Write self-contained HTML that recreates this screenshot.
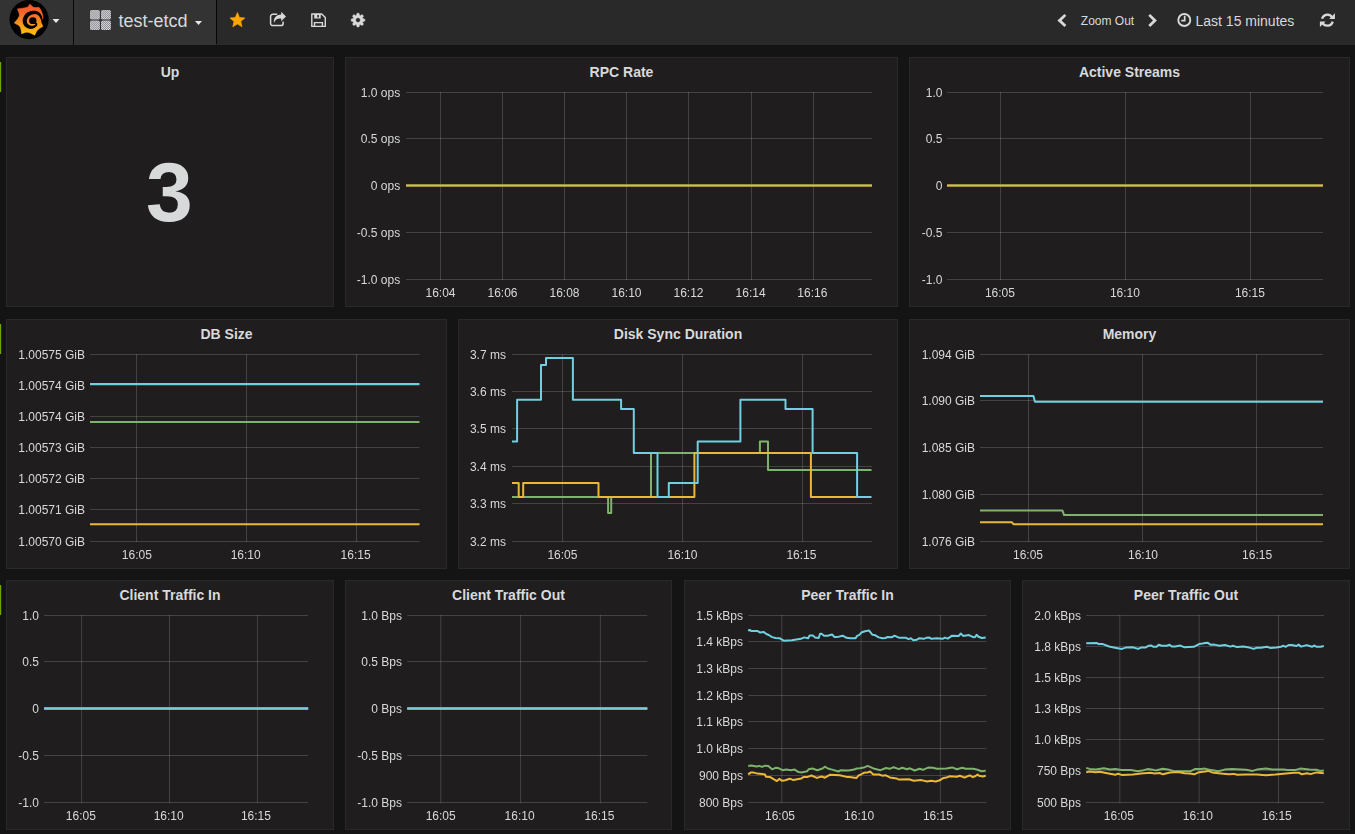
<!DOCTYPE html>
<html lang="en"><head><meta charset="utf-8"><title>Grafana - test-etcd</title>
<style>
html,body{margin:0;padding:0}
body{width:1355px;height:834px;overflow:hidden;background:#141414;color:#d8d9da;font-family:"Liberation Sans",Arial,sans-serif;font-size:14px;position:relative}
.navbar{position:absolute;left:0;top:0;width:1355px;height:45px;background:#292929}
.navbar .logo{position:absolute;left:0;top:0;width:73px;height:45px;background:#333;border-right:1px solid #080808}
.navbar .dash{position:absolute;left:74px;top:0;width:142px;height:45px;background:#333}
.navbar .dash:after{content:'';position:absolute;left:142px;top:0;width:1px;height:44px;background:#060606}
.navbar .dash .name{position:absolute;left:44.5px;top:10px;font-size:18px;line-height:22px;color:#d8d9da;white-space:nowrap}
.navbar svg{position:absolute;left:0;top:0}
.navbar .t{position:absolute;white-space:nowrap;color:#d8d9da}
.grip{position:absolute;left:0;width:2px;height:30px;background:linear-gradient(90deg,#6fa700 0,#6fa700 50%,#232b12 50%,#232b12 100%)}
.panel{position:absolute;background:#1f1d1d;border:1px solid #292929;overflow:hidden}
.ptitle{position:absolute;left:0;right:0;top:6px;text-align:center;font-weight:bold;font-size:14px;line-height:16px;color:#d8d9da}
.chart{position:absolute;left:-1px;top:-1px;will-change:transform}
.chart .ax text, .chart text{font-family:"Liberation Sans",Arial,sans-serif;font-size:12px;fill:#d8d9da}
.big{position:absolute;left:-0.6px;right:0.6px;top:86px;text-align:center;font-size:84px;font-weight:bold;line-height:96px;color:#d8d9da}

</style></head>
<body>
<div class="navbar">
<div class="logo"></div>
<div class="dash"><span class="name">test-etcd</span></div>
<span class="t" style="left:1080.8px;top:14px;font-size:12px;line-height:14px">Zoom Out</span>
<span class="t" style="left:1195.5px;top:13px;font-size:14px;line-height:16px">Last 15 minutes</span>
<svg width="1355" height="45" viewBox="0 0 1355 45">
<defs><linearGradient id="lg" x1="0" y1="4" x2="0" y2="35" gradientUnits="userSpaceOnUse"><stop offset="0" stop-color="#f15b2a"/><stop offset="0.25" stop-color="#f2622a"/><stop offset="1" stop-color="#fcc50c"/></linearGradient>
<pattern id="hatch" width="1.4" height="1.4" patternUnits="userSpaceOnUse" patternTransform="rotate(-45)"><rect width="1.4" height="1.4" fill="#e6e6ea"/><rect width="1.4" height="0.7" fill="#7c7c82"/></pattern></defs>
<circle cx="29.1" cy="19.6" r="19.6" fill="#000"/>
<path d="M29.8 3.9 L32.26 6.27 Q33.77 7.72 35.76 7.56 L39 7.3  C41.6 10.4 43.1 14.6 43.0 18.9 L40.9 21.5 L42.9 26.4 L39.43 28.59 Q37.3 29.93 36.31 31.93 L34.7 35.2 L30.29 32.98 Q27.59 31.63 25.31 32.45 L21.6 33.8 L20.93 29.13 Q20.51 26.27 18.15 25.03 L14.3 23 L17.93 18.51 Q20.16 15.76 19.11 13.15 L17.4 8.9 L23.96 7.97 Q27.98 7.4 28.67 6.07 L29.8 3.9 Z" fill="url(#lg)" stroke="url(#lg)" stroke-width="0.5" stroke-linejoin="round"/>
<path d="M43.35 21.77 L43.29 21.56 L43.21 21.27 L43.11 20.93 L42.99 20.56 L42.88 20.16 L42.76 19.75 L42.65 19.35 L42.54 18.98 L42.45 18.63 L42.37 18.26 L42.29 17.87 L42.2 17.46 L42.1 17.03 L41.98 16.6 L41.83 16.16 L41.66 15.73 L41.47 15.33 L41.27 14.95 L41.06 14.57 L40.82 14.19 L40.56 13.82 L40.27 13.45 L39.95 13.1 L39.61 12.77 L39.26 12.47 L38.89 12.18 L38.49 11.91 L38.07 11.65 L37.62 11.41 L37.14 11.2 L36.63 11.02 L36.1 10.88 L35.58 10.78 L35.04 10.71 L34.49 10.67 L33.92 10.66 L33.34 10.68 L32.74 10.74 L32.13 10.83 L31.54 10.96 L30.95 11.1 L30.34 11.26 L29.68 11.46 L28.99 11.7 L28.29 12 L27.57 12.36 L26.87 12.82 L26.21 13.36 L25.62 13.96 L25.07 14.62 L24.54 15.33 L24.06 16.08 L23.61 16.88 L23.23 17.71 L22.93 18.57 L22.73 19.46 L22.64 20.36 L22.67 21.24 L22.78 22.11 L22.97 22.95 L23.23 23.77 L23.56 24.55 L23.96 25.28 L24.45 25.98 L25.05 26.62 L25.73 27.15 L26.44 27.59 L27.16 27.96 L27.89 28.25 L28.6 28.49 L29.28 28.67 L29.94 28.81 L30.61 28.89 L31.28 28.88 L31.92 28.81 L32.52 28.69 L33.08 28.52 L33.6 28.33 L34.07 28.12 L34.53 27.89 L34.99 27.61 L35.43 27.29 L35.85 26.94 L36.23 26.57 L36.57 26.18 L36.87 25.78 L37.11 25.37 L37.31 24.88 L37.35 24.29 L37.2 23.77 L36.98 23.37 L36.73 23.05 L36.48 22.78 L36.27 22.57 L36.13 22.42 L36.04 22.33 L34.76 23.27 L34.87 23.45 L35.05 23.66 L35.22 23.88 L35.37 24.09 L35.48 24.28 L35.53 24.41 L35.51 24.41 L35.49 24.32 L35.43 24.35 L35.27 24.5 L35.04 24.69 L34.76 24.9 L34.44 25.09 L34.11 25.27 L33.79 25.41 L33.47 25.51 L33.13 25.6 L32.76 25.68 L32.39 25.74 L32.02 25.77 L31.66 25.78 L31.31 25.75 L30.99 25.69 L30.66 25.59 L30.26 25.44 L29.79 25.24 L29.3 25 L28.82 24.73 L28.38 24.44 L28.01 24.15 L27.73 23.87 L27.55 23.62 L27.39 23.32 L27.22 22.92 L27.07 22.46 L26.95 21.97 L26.86 21.47 L26.83 20.98 L26.83 20.53 L26.87 20.14 L26.97 19.74 L27.13 19.26 L27.36 18.72 L27.64 18.15 L27.97 17.6 L28.32 17.07 L28.67 16.61 L28.99 16.24 L29.29 15.95 L29.63 15.69 L30.03 15.44 L30.48 15.2 L30.97 14.98 L31.47 14.78 L31.98 14.6 L32.46 14.44 L32.89 14.31 L33.29 14.22 L33.68 14.15 L34.07 14.1 L34.45 14.08 L34.81 14.08 L35.17 14.09 L35.5 14.12 L35.8 14.17 L36.09 14.23 L36.38 14.32 L36.67 14.43 L36.96 14.56 L37.24 14.7 L37.53 14.86 L37.79 15.03 L38.03 15.2 L38.26 15.38 L38.48 15.58 L38.71 15.81 L38.92 16.06 L39.14 16.32 L39.35 16.59 L39.54 16.87 L39.72 17.14 L39.88 17.43 L40.04 17.76 L40.2 18.11 L40.35 18.47 L40.51 18.86 L40.68 19.24 L40.86 19.62 L41.05 19.99 L41.24 20.37 L41.44 20.75 L41.64 21.12 L41.83 21.46 L42 21.77 L42.14 22.03 L42.25 22.23Z" fill="#000"/>
<ellipse cx="32.8" cy="20.7" rx="3.7" ry="3.4" fill="#000"/>
<path d="M52.5 19 h7 l-3.5 3.9z M195 21 h7 l-3.5 3.9z" fill="#e8e8e8"/>
<rect x="90" y="10" width="9.9" height="9.5" rx="1.6" fill="url(#hatch)"/>
<rect x="101" y="10" width="9.9" height="9.5" rx="1.6" fill="url(#hatch)"/>
<rect x="90" y="20.6" width="9.9" height="9.5" rx="1.6" fill="url(#hatch)"/>
<rect x="101" y="20.6" width="9.9" height="9.5" rx="1.6" fill="url(#hatch)"/>
<polygon points="237.4,12.6 239.46,17.57 244.82,17.99 240.73,21.48 241.98,26.71 237.4,23.9 232.82,26.71 234.07,21.48 229.98,17.99 235.34,17.57" fill="#ffa500" stroke="#ffa500" stroke-width="0.7" stroke-linejoin="round"/>
<path d="M277.2 14.3 H272.7 a2.1 2.1 0 0 0 -2.1 2.1 V23.5 a2.1 2.1 0 0 0 2.1 2.1 H281 a2.1 2.1 0 0 0 2.1 -2.1 V21.6" fill="none" stroke="#d8d9da" stroke-width="1.5"/>
<path d="M281.2 11.7 L286 16.5 L281.2 21.3 V18.5 C277.2 18.4 275 19.6 274 23.3 C273.2 18 276 14.7 281.2 14.6 Z" fill="#d8d9da"/>
<path d="M311.8 14 H321.7 L325.3 17.6 V26.4 H311.8 Z" fill="none" stroke="#d8d9da" stroke-width="1.4" stroke-linejoin="round"/>
<path d="M314.2 14 H320.7 V18.5 H314.2 Z M317.3 15.1 H318.9 V17.5 H317.3 Z" fill="#d8d9da" fill-rule="evenodd"/>
<path d="M314.5 26.4 V22.6 H322.4 V26.4" fill="none" stroke="#d8d9da" stroke-width="1.4"/>
<path d="M362.75 18.54 L364.83 19.13 L364.83 21.07 L362.75 21.66 L362.46 22.36 L363.52 24.24 L362.14 25.62 L360.26 24.56 L359.56 24.85 L358.97 26.93 L357.03 26.93 L356.44 24.85 L355.74 24.56 L353.86 25.62 L352.48 24.24 L353.54 22.36 L353.25 21.66 L351.17 21.07 L351.17 19.13 L353.25 18.54 L353.54 17.84 L352.48 15.96 L353.86 14.58 L355.74 15.64 L356.44 15.35 L357.03 13.27 L358.97 13.27 L359.56 15.35 L360.26 15.64 L362.14 14.58 L363.52 15.96 L362.46 17.84Z M355.6 20.1 a2.4 2.4 0 1 0 4.8 0 a2.4 2.4 0 1 0 -4.8 0Z" fill="#d8d9da" fill-rule="evenodd" stroke="#d8d9da" stroke-width="0.5" stroke-linejoin="round"/>
<polygon points="1064.4,13.9 1066.3,15.8 1061.6,20.4 1066.3,25 1064.4,26.9 1057.4,20.4" fill="#d8d9da"/>
<polygon points="1150.2,13.9 1148.3,15.8 1153,20.4 1148.3,25 1150.2,26.9 1156.9,20.4" fill="#d8d9da"/>
<circle cx="1184.3" cy="20" r="6" fill="none" stroke="#d8d9da" stroke-width="1.9"/>
<path d="M1184.7 15.8 V20.7 H1181.3" fill="none" stroke="#d8d9da" stroke-width="1.7"/>
<path d="M1322.09 18.78 A5.5 5.5 0 0 1 1332.38 17.88" fill="none" stroke="#d8d9da" stroke-width="2.3"/>
<path d="M1332.71 21.62 A5.5 5.5 0 0 1 1322.42 22.52" fill="none" stroke="#d8d9da" stroke-width="2.3"/>
<path d="M1334.9 13.3 V19 H1329.2 Z M1319.9 27.1 V21.4 H1325.6 Z" fill="#d8d9da"/>
</svg>
</div>
<div class="grip" style="top:62px"></div>
<div class="grip" style="top:324px"></div>
<div class="grip" style="top:585px"></div>
<div class="panel" style="left:6px;top:57px;width:326px;height:248px">
<div class="ptitle">Up</div>
<div class="big">3</div>
</div>
<div class="panel" style="left:345px;top:57px;width:551px;height:248px">
<div class="ptitle">RPC Rate</div>
<svg class="chart" width="553" height="250" viewBox="345 57 553 250">
<g stroke="rgba(200,200,200,0.22)" stroke-width="1">
<line x1="406" x2="872" y1="92.5" y2="92.5"/>
<line x1="406" x2="872" y1="138.5" y2="138.5"/>
<line x1="406" x2="872" y1="185.5" y2="185.5"/>
<line x1="406" x2="872" y1="232.5" y2="232.5"/>
<line x1="406" x2="872" y1="279.5" y2="279.5"/>
<line x1="440.5" x2="440.5" y1="92" y2="280"/>
<line x1="502.5" x2="502.5" y1="92" y2="280"/>
<line x1="564.5" x2="564.5" y1="92" y2="280"/>
<line x1="626.5" x2="626.5" y1="92" y2="280"/>
<line x1="688.5" x2="688.5" y1="92" y2="280"/>
<line x1="751.5" x2="751.5" y1="92" y2="280"/>
<line x1="813.5" x2="813.5" y1="92" y2="280"/>
</g>
<g class="ax" text-anchor="end">
<text x="400.2" y="96.8">1.0 ops</text>
<text x="400.2" y="142.8">0.5 ops</text>
<text x="400.2" y="189.8">0 ops</text>
<text x="400.2" y="236.8">-0.5 ops</text>
<text x="400.2" y="283.8">-1.0 ops</text>
</g>
<g class="ax" text-anchor="middle">
<text x="440.5" y="296.5">16:04</text>
<text x="502.5" y="296.5">16:06</text>
<text x="564.5" y="296.5">16:08</text>
<text x="626.5" y="296.5">16:10</text>
<text x="688.5" y="296.5">16:12</text>
<text x="750.6" y="296.5">16:14</text>
<text x="812.3" y="296.5">16:16</text>
</g>
<g fill="none" stroke-width="2" stroke-linejoin="round">
<path stroke="#7EB26D" d="M406 185.5 L872 185.5"/>
<path stroke="#EAB839" d="M406 185.5 L872 185.5"/>
</g>
</svg>

</div>
<div class="panel" style="left:909px;top:57px;width:439px;height:248px">
<div class="ptitle">Active Streams</div>
<svg class="chart" width="441" height="250" viewBox="909 57 441 250">
<g stroke="rgba(200,200,200,0.22)" stroke-width="1">
<line x1="947" x2="1323" y1="92.5" y2="92.5"/>
<line x1="947" x2="1323" y1="138.5" y2="138.5"/>
<line x1="947" x2="1323" y1="185.5" y2="185.5"/>
<line x1="947" x2="1323" y1="232.5" y2="232.5"/>
<line x1="947" x2="1323" y1="279.5" y2="279.5"/>
<line x1="1000.5" x2="1000.5" y1="92" y2="280"/>
<line x1="1125.5" x2="1125.5" y1="92" y2="280"/>
<line x1="1250.5" x2="1250.5" y1="92" y2="280"/>
</g>
<g class="ax" text-anchor="end">
<text x="942.5" y="96.8">1.0</text>
<text x="942.5" y="142.8">0.5</text>
<text x="942.5" y="189.8">0</text>
<text x="942.5" y="236.8">-0.5</text>
<text x="942.5" y="283.8">-1.0</text>
</g>
<g class="ax" text-anchor="middle">
<text x="999.95" y="296.5">16:05</text>
<text x="1124.9" y="296.5">16:10</text>
<text x="1249.9" y="296.5">16:15</text>
</g>
<g fill="none" stroke-width="2" stroke-linejoin="round">
<path stroke="#7EB26D" d="M947 185.5 L1323 185.5"/>
<path stroke="#EAB839" d="M947 185.5 L1323 185.5"/>
</g>
</svg>

</div>
<div class="panel" style="left:6px;top:319px;width:439px;height:248px">
<div class="ptitle">DB Size</div>
<svg class="chart" width="441" height="250" viewBox="6 319 441 250">
<g stroke="rgba(200,200,200,0.22)" stroke-width="1">
<line x1="90" x2="419.5" y1="354.5" y2="354.5"/>
<line x1="90" x2="419.5" y1="385.5" y2="385.5"/>
<line x1="90" x2="419.5" y1="416.5" y2="416.5"/>
<line x1="90" x2="419.5" y1="447.5" y2="447.5"/>
<line x1="90" x2="419.5" y1="478.5" y2="478.5"/>
<line x1="90" x2="419.5" y1="509.5" y2="509.5"/>
<line x1="90" x2="419.5" y1="541.5" y2="541.5"/>
<line x1="136.5" x2="136.5" y1="354" y2="542"/>
<line x1="246.5" x2="246.5" y1="354" y2="542"/>
<line x1="356.5" x2="356.5" y1="354" y2="542"/>
</g>
<g class="ax" text-anchor="end">
<text x="85" y="358.8">1.00575 GiB</text>
<text x="85" y="389.8">1.00574 GiB</text>
<text x="85" y="420.8">1.00574 GiB</text>
<text x="85" y="451.8">1.00573 GiB</text>
<text x="85" y="482.8">1.00572 GiB</text>
<text x="85" y="513.8">1.00571 GiB</text>
<text x="85" y="545.8">1.00570 GiB</text>
</g>
<g class="ax" text-anchor="middle">
<text x="136.8" y="558.5">16:05</text>
<text x="245.7" y="558.5">16:10</text>
<text x="355.6" y="558.5">16:15</text>
</g>
<g fill="none" stroke-width="2" stroke-linejoin="round">
<path stroke="#7EB26D" d="M90 422.1 L419.5 422.1"/>
<path stroke="#EAB839" d="M90 524.15 L419.5 524.15"/>
<path stroke="#6ED0E0" d="M90 384.0 L419.5 384.0"/>
</g>
</svg>

</div>
<div class="panel" style="left:458px;top:319px;width:438px;height:248px">
<div class="ptitle">Disk Sync Duration</div>
<svg class="chart" width="440" height="250" viewBox="458 319 440 250">
<g stroke="rgba(200,200,200,0.22)" stroke-width="1">
<line x1="512" x2="872" y1="354.5" y2="354.5"/>
<line x1="512" x2="872" y1="391.5" y2="391.5"/>
<line x1="512" x2="872" y1="428.5" y2="428.5"/>
<line x1="512" x2="872" y1="466.5" y2="466.5"/>
<line x1="512" x2="872" y1="503.5" y2="503.5"/>
<line x1="512" x2="872" y1="541.5" y2="541.5"/>
<line x1="562.5" x2="562.5" y1="354" y2="542"/>
<line x1="682.5" x2="682.5" y1="354" y2="542"/>
<line x1="802.5" x2="802.5" y1="354" y2="542"/>
</g>
<g class="ax" text-anchor="end">
<text x="505.9" y="358.8">3.7 ms</text>
<text x="505.9" y="395.8">3.6 ms</text>
<text x="505.9" y="432.8">3.5 ms</text>
<text x="505.9" y="470.8">3.4 ms</text>
<text x="505.9" y="507.8">3.3 ms</text>
<text x="505.9" y="545.8">3.2 ms</text>
</g>
<g class="ax" text-anchor="middle">
<text x="562.4" y="558.5">16:05</text>
<text x="682.4" y="558.5">16:10</text>
<text x="801.45" y="558.5">16:15</text>
</g>
<g fill="none" stroke-width="2" stroke-linejoin="round">
<path stroke="#7EB26D" d="M512 496.9 L608.1 496.9 L608.1 512.9 L611.2 512.9 L611.2 496.9 L651 496.9 L651 452.9 L759.9 452.9 L759.9 441.4 L768 441.4 L768 470.1 L871.5 470.1"/>
<path stroke="#EAB839" d="M512 482.9 L518.7 482.9 L518.7 496.9 L523.2 496.9 L523.2 482.9 L598.5 482.9 L598.5 496.9 L694.4 496.9 L694.4 452.9 L810.9 452.9 L810.9 496.9 L857.1 496.9"/>
<path stroke="#6ED0E0" d="M512 441.4 L517.1 441.4 L517.1 399.8 L541 399.8 L541 364.9 L546 364.9 L546 358.1 L572.9 358.1 L572.9 399.8 L621.1 399.7 L621.1 409.1 L633.8 409.1 L633.8 452.9 L657.5 452.9 L657.5 496.9 L668.8 496.9 L668.8 482.9 L697.7 482.9 L697.7 441.4 L740.4 441.4 L740.4 399.7 L785.5 399.7 L785.5 409.1 L812.6 409.1 L812.6 452.9 L857.1 452.9 L857.1 496.9 L871.5 496.9"/>
</g>
</svg>

</div>
<div class="panel" style="left:909px;top:319px;width:439px;height:248px">
<div class="ptitle">Memory</div>
<svg class="chart" width="441" height="250" viewBox="909 319 441 250">
<g stroke="rgba(200,200,200,0.22)" stroke-width="1">
<line x1="980" x2="1323" y1="354.5" y2="354.5"/>
<line x1="980" x2="1323" y1="400.5" y2="400.5"/>
<line x1="980" x2="1323" y1="447.5" y2="447.5"/>
<line x1="980" x2="1323" y1="494.5" y2="494.5"/>
<line x1="980" x2="1323" y1="541.5" y2="541.5"/>
<line x1="1028.5" x2="1028.5" y1="354" y2="542"/>
<line x1="1142.5" x2="1142.5" y1="354" y2="542"/>
<line x1="1256.5" x2="1256.5" y1="354" y2="542"/>
</g>
<g class="ax" text-anchor="end">
<text x="975" y="358.8">1.094 GiB</text>
<text x="975" y="404.8">1.090 GiB</text>
<text x="975" y="451.8">1.085 GiB</text>
<text x="975" y="498.8">1.080 GiB</text>
<text x="975" y="545.8">1.076 GiB</text>
</g>
<g class="ax" text-anchor="middle">
<text x="1028" y="558.5">16:05</text>
<text x="1143" y="558.5">16:10</text>
<text x="1257.1" y="558.5">16:15</text>
</g>
<g fill="none" stroke-width="2" stroke-linejoin="round">
<path stroke="#7EB26D" d="M980 510.4 L1062.4 510.4 L1064.1 515.1 L1323 515.1"/>
<path stroke="#EAB839" d="M980 522.3 L1012 522.3 L1013.5 524.2 L1323 524.2"/>
<path stroke="#6ED0E0" d="M980 396.1 L1033.4 396.1 L1035 401.8 L1323 401.8"/>
</g>
</svg>

</div>
<div class="panel" style="left:6px;top:580px;width:326px;height:248px">
<div class="ptitle">Client Traffic In</div>
<svg class="chart" width="328" height="250" viewBox="6 580 328 250">
<g stroke="rgba(200,200,200,0.22)" stroke-width="1">
<line x1="44.15" x2="308.15" y1="615.5" y2="615.5"/>
<line x1="44.15" x2="308.15" y1="661.5" y2="661.5"/>
<line x1="44.15" x2="308.15" y1="708.5" y2="708.5"/>
<line x1="44.15" x2="308.15" y1="755.5" y2="755.5"/>
<line x1="44.15" x2="308.15" y1="802.5" y2="802.5"/>
<line x1="81.6" x2="81.6" y1="615" y2="803"/>
<line x1="169.5" x2="169.5" y1="615" y2="803"/>
<line x1="257.4" x2="257.4" y1="615" y2="803"/>
</g>
<g class="ax" text-anchor="end">
<text x="39" y="619.8">1.0</text>
<text x="39" y="665.8">0.5</text>
<text x="39" y="712.8">0</text>
<text x="39" y="759.8">-0.5</text>
<text x="39" y="806.8">-1.0</text>
</g>
<g class="ax" text-anchor="middle">
<text x="80.8" y="819.5">16:05</text>
<text x="168.7" y="819.5">16:10</text>
<text x="255.9" y="819.5">16:15</text>
</g>
<g fill="none" stroke-width="2" stroke-linejoin="round">
<path stroke="#7EB26D" d="M44.15 708.5 L308.15 708.5"/>
<path stroke="#EAB839" d="M44.15 708.5 L308.15 708.5"/>
<path stroke="#6ED0E0" d="M44.15 708.5 L308.15 708.5"/>
</g>
</svg>

</div>
<div class="panel" style="left:345px;top:580px;width:325px;height:248px">
<div class="ptitle">Client Traffic Out</div>
<svg class="chart" width="327" height="250" viewBox="345 580 327 250">
<g stroke="rgba(200,200,200,0.22)" stroke-width="1">
<line x1="407.28" x2="647.28" y1="615.5" y2="615.5"/>
<line x1="407.28" x2="647.28" y1="661.5" y2="661.5"/>
<line x1="407.28" x2="647.28" y1="708.5" y2="708.5"/>
<line x1="407.28" x2="647.28" y1="755.5" y2="755.5"/>
<line x1="407.28" x2="647.28" y1="802.5" y2="802.5"/>
<line x1="440.78" x2="440.78" y1="615" y2="803"/>
<line x1="520.6" x2="520.6" y1="615" y2="803"/>
<line x1="600.4" x2="600.4" y1="615" y2="803"/>
</g>
<g class="ax" text-anchor="end">
<text x="402" y="619.8">1.0 Bps</text>
<text x="402" y="665.8">0.5 Bps</text>
<text x="402" y="712.8">0 Bps</text>
<text x="402" y="759.8">-0.5 Bps</text>
<text x="402" y="806.8">-1.0 Bps</text>
</g>
<g class="ax" text-anchor="middle">
<text x="440.65" y="819.5">16:05</text>
<text x="519.6" y="819.5">16:10</text>
<text x="599.4" y="819.5">16:15</text>
</g>
<g fill="none" stroke-width="2" stroke-linejoin="round">
<path stroke="#7EB26D" d="M407.28 708.5 L647.28 708.5"/>
<path stroke="#EAB839" d="M407.28 708.5 L647.28 708.5"/>
<path stroke="#6ED0E0" d="M407.28 708.5 L647.28 708.5"/>
</g>
</svg>

</div>
<div class="panel" style="left:684px;top:580px;width:325px;height:248px">
<div class="ptitle">Peer Traffic In</div>
<svg class="chart" width="327" height="250" viewBox="684 580 327 250">
<g stroke="rgba(200,200,200,0.22)" stroke-width="1">
<line x1="748.33" x2="986.33" y1="615.5" y2="615.5"/>
<line x1="748.33" x2="986.33" y1="641.5" y2="641.5"/>
<line x1="748.33" x2="986.33" y1="668.5" y2="668.5"/>
<line x1="748.33" x2="986.33" y1="695.5" y2="695.5"/>
<line x1="748.33" x2="986.33" y1="721.5" y2="721.5"/>
<line x1="748.33" x2="986.33" y1="748.5" y2="748.5"/>
<line x1="748.33" x2="986.33" y1="775.5" y2="775.5"/>
<line x1="748.33" x2="986.33" y1="802.5" y2="802.5"/>
<line x1="781.8" x2="781.8" y1="615" y2="803"/>
<line x1="861.05" x2="861.05" y1="615" y2="803"/>
<line x1="940.4" x2="940.4" y1="615" y2="803"/>
</g>
<g class="ax" text-anchor="end">
<text x="743" y="619.8">1.5 kBps</text>
<text x="743" y="645.8">1.4 kBps</text>
<text x="743" y="672.8">1.3 kBps</text>
<text x="743" y="699.8">1.2 kBps</text>
<text x="743" y="725.8">1.1 kBps</text>
<text x="743" y="752.8">1.0 kBps</text>
<text x="743" y="779.8">900 Bps</text>
<text x="743" y="806.8">800 Bps</text>
</g>
<g class="ax" text-anchor="middle">
<text x="780" y="819.5">16:05</text>
<text x="859.1" y="819.5">16:10</text>
<text x="937.9" y="819.5">16:15</text>
</g>
<g fill="none" stroke-width="2" stroke-linejoin="round">
<path stroke="#7EB26D" d="M748.2 765.9 L751.5 765.4 L756.3 766.4 L759.2 765.9 L762.1 766.9 L765 765.7 L768.3 766.1 L772.1 769.3 L775.5 767.8 L778.4 768.1 L782.7 770.2 L786.1 769.6 L790.9 770.2 L794.7 769.6 L798.5 772.1 L801.4 772.4 L807.2 771.2 L808.6 769.3 L812.5 768.5 L817.3 770.2 L822.5 768.5 L825.2 766.7 L827.8 768.5 L832.1 769.6 L838.4 771.5 L840.8 770.2 L848.4 770.5 L854.2 769.6 L856.6 768.5 L860 768.3 L863.8 767.6 L867.7 765.9 L874.4 768.8 L880.6 770.2 L885.9 768 L889.8 768.8 L893.6 767.2 L898.9 769.1 L902.2 767.8 L907 769.3 L909.9 768.3 L914.7 770.5 L919.5 768.8 L922.9 769.8 L928.1 767.6 L932.9 767.8 L936.8 768.8 L946.4 768.6 L952.1 767.4 L956.9 769.3 L962.2 767.8 L965.6 768.8 L973.2 768.8 L977.6 769.8 L981.4 771.2 L985.7 770.7"/>
<path stroke="#EAB839" d="M748.2 774.4 L750.6 772.6 L753.9 772.6 L757.3 773.6 L762.1 774.1 L765 774.5 L765.9 776.7 L769.8 776.9 L776.9 781.1 L779.3 778.9 L782.2 780.8 L785.1 780.3 L789.9 778.7 L793.3 780.1 L801.4 778.4 L803.8 776.9 L807.7 776.9 L811.5 775.5 L816.8 777.9 L821.6 776.5 L824.9 777.7 L830.2 774.7 L835 775 L839.8 775.3 L846.5 776.9 L849.4 776.9 L856.6 777.9 L858.5 775.5 L860 775 L863.8 772.8 L867.2 772.6 L870.1 771.5 L873.4 774.5 L879.2 774.5 L882.1 775.7 L885.9 775.3 L889.8 777.4 L896.5 778.4 L898.4 779.5 L908.9 779.2 L913.7 780.8 L921.4 780.1 L927.2 781.5 L931 780.8 L935.8 781.5 L939.7 780.3 L943.5 777.9 L946.4 777.6 L949.3 776.3 L956.9 776.8 L959.8 775.8 L964.6 777.6 L968.4 775.8 L970.4 775.5 L972.8 777.2 L975.6 776 L977.6 774.5 L979 775.8 L982.8 776.5 L985.7 775.7"/>
<path stroke="#6ED0E0" d="M748.2 630.9 L749.6 629.9 L751.5 631.1 L757.8 631.1 L760.2 632.6 L763.5 631.9 L766.4 634 L768.8 635 L772.1 637.1 L775.5 638 L779.8 638.3 L783.7 640.7 L791.8 640.2 L800.9 638.8 L804.3 637.4 L808.1 638.3 L809.6 635.4 L812.9 635.4 L814.9 637.4 L818.7 638 L820.1 633.8 L821.6 633.8 L824 635.7 L827.8 635.7 L832.1 634.5 L834.5 637.1 L836.9 637.1 L842.7 635.7 L846.5 637.8 L850.4 638.3 L855.6 638.3 L857.1 635.9 L859 635.1 L861.9 632.3 L865 631.2 L869.1 630.6 L872.5 634.8 L874.9 635.1 L878.7 637.4 L882.6 638.3 L885.4 638 L887.8 636.9 L892.1 637.2 L894.5 635.7 L899.3 637.8 L906.1 637.8 L908.5 639.1 L910.9 638.3 L913.3 640.2 L916.6 639.8 L919 638.3 L923.8 638.8 L926.2 637.8 L929.1 637.5 L931.5 638.8 L936.8 638.3 L942.5 638.8 L944.9 637.6 L947.8 638.6 L952.1 635.7 L958.8 635.9 L960.8 633.5 L963.2 635.9 L968.9 635.1 L973.2 637.2 L975.2 636.9 L976.6 634.8 L978.5 636.7 L981.9 638 L985.7 637.4"/>
</g>
</svg>

</div>
<div class="panel" style="left:1022px;top:580px;width:326px;height:248px">
<div class="ptitle">Peer Traffic Out</div>
<svg class="chart" width="328" height="250" viewBox="1022 580 328 250">
<g stroke="rgba(200,200,200,0.22)" stroke-width="1">
<line x1="1086" x2="1324" y1="615.5" y2="615.5"/>
<line x1="1086" x2="1324" y1="646.5" y2="646.5"/>
<line x1="1086" x2="1324" y1="677.5" y2="677.5"/>
<line x1="1086" x2="1324" y1="708.5" y2="708.5"/>
<line x1="1086" x2="1324" y1="739.5" y2="739.5"/>
<line x1="1086" x2="1324" y1="770.5" y2="770.5"/>
<line x1="1086" x2="1324" y1="802.5" y2="802.5"/>
<line x1="1119.8" x2="1119.8" y1="615" y2="803"/>
<line x1="1199.15" x2="1199.15" y1="615" y2="803"/>
<line x1="1278.5" x2="1278.5" y1="615" y2="803"/>
</g>
<g class="ax" text-anchor="end">
<text x="1081" y="619.8">2.0 kBps</text>
<text x="1081" y="650.8">1.8 kBps</text>
<text x="1081" y="681.8">1.5 kBps</text>
<text x="1081" y="712.8">1.3 kBps</text>
<text x="1081" y="743.8">1.0 kBps</text>
<text x="1081" y="774.8">750 Bps</text>
<text x="1081" y="806.8">500 Bps</text>
</g>
<g class="ax" text-anchor="middle">
<text x="1118.8" y="819.5">16:05</text>
<text x="1197.8" y="819.5">16:10</text>
<text x="1276.75" y="819.5">16:15</text>
</g>
<g fill="none" stroke-width="2" stroke-linejoin="round">
<path stroke="#7EB26D" d="M1086.2 767.9 L1089.5 768.9 L1095.7 769.4 L1103.9 768.3 L1110.1 769.6 L1115.3 768.9 L1121.5 770.1 L1130.8 769.9 L1138 771.2 L1142.2 770.6 L1147.3 769.1 L1151.5 769.4 L1155.6 770.4 L1162.8 768.8 L1168 769.4 L1173.2 770.9 L1182.5 771.2 L1190.7 771.2 L1194.8 769.1 L1201 769.1 L1205 768.6 L1211.2 770.1 L1218.4 771.2 L1224.6 769.6 L1231.9 768.9 L1246.3 769.8 L1252.5 770.9 L1256.7 769.6 L1266 768.6 L1272.2 769.6 L1283.5 769.6 L1287.7 770.1 L1294.9 770.1 L1300.1 768.6 L1309.3 769.4 L1316.6 769.8 L1319.7 770.9 L1323.8 770.4"/>
<path stroke="#EAB839" d="M1086.2 772.4 L1089.5 771.5 L1095.7 772.2 L1099.8 771.7 L1106 773 L1115.3 774.8 L1117.9 773.7 L1122.5 775.1 L1132.9 774.6 L1141.1 773.5 L1150.4 772.7 L1154.6 773.5 L1159.7 773 L1162.8 774.3 L1170.1 772.5 L1178.3 772 L1184.5 773.2 L1189.7 773.4 L1194.3 774.3 L1199 772.2 L1205 771.4 L1208.1 770.9 L1212.2 772.4 L1220.5 773.4 L1228.8 774.3 L1233.9 773.9 L1237 774.8 L1246.3 774.6 L1256.7 774.6 L1266 775.3 L1275.3 774.6 L1283.5 773.7 L1293.9 772.7 L1299 772.7 L1301.6 774.3 L1307.3 773.2 L1310.4 774.1 L1316.6 772.4 L1323.8 773.2"/>
<path stroke="#6ED0E0" d="M1086.2 643.2 L1096.7 643 L1098.8 644.1 L1102.9 644.1 L1109.1 646.5 L1116.3 647.9 L1122 648.9 L1125.6 647.6 L1132.9 647.2 L1138 648.9 L1141.1 647.6 L1145.8 647.4 L1148.4 645.8 L1151.5 645.6 L1153.5 646.8 L1156.6 646.8 L1158.7 644.8 L1161.8 645.8 L1167 645.8 L1169.5 644.8 L1172.1 646.6 L1175.2 646.6 L1180.4 645.6 L1184 647.2 L1193.8 646.8 L1199 644.1 L1202.6 643.5 L1205 643 L1207.6 642.7 L1210.7 644.8 L1214.3 644.6 L1219.5 645.8 L1225.1 645 L1230.3 646.6 L1232.9 645.8 L1237 647.1 L1243.2 646.6 L1249.4 647.6 L1253.6 648.9 L1256.7 647.7 L1260.8 647.7 L1267 646.8 L1270.1 647.9 L1276.3 647.4 L1280.9 646.8 L1283.5 645.8 L1285.6 646.8 L1288.7 645 L1291.8 645 L1296.4 646 L1298.5 644.6 L1301.1 646.6 L1306.8 645.1 L1311.9 646.8 L1314.5 645.5 L1316.6 646.8 L1320.7 646.8 L1323.8 646.1"/>
</g>
</svg>

</div>
</body></html>
